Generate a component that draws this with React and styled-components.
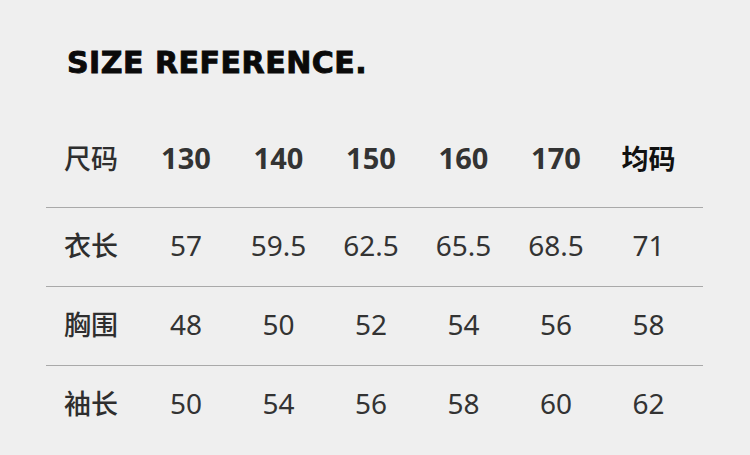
import React from "react";
import styled, { createGlobalStyle } from "styled-components";

const GlobalStyle = createGlobalStyle`
  html, body {
    margin: 0;
    padding: 0;
    background: #efefef;
  }
`;

const sizes = ["130", "140", "150", "160", "170"];

const rows = [
  { label: "衣长", values: ["57", "59.5", "62.5", "65.5", "68.5", "71"] },
  { label: "胸围", values: ["48", "50", "52", "54", "56", "58"] },
  { label: "袖长", values: ["50", "54", "56", "58", "60", "62"] },
];

export default function App() {
  return (
    <Page>
      <GlobalStyle />
      <Title>SIZE REFERENCE.</Title>
      <Table>
        <Row $header $line>
          <Label>尺码</Label>
          {sizes.map((s) => (
            <HeadCell key={s}>{s}</HeadCell>
          ))}
          <HeadCell $cjk>均码</HeadCell>
        </Row>
        {rows.map((r, i) => (
          <Row key={r.label} $line={i < rows.length - 1}>
            <Label>{r.label}</Label>
            {r.values.map((v, j) => (
              <Cell key={j}>{v}</Cell>
            ))}
          </Row>
        ))}
      </Table>
    </Page>
  );
}

const Page = styled.div`
  width: 750px;
  height: 455px;
  box-sizing: border-box;
  padding: 47px 47px 0 46px;
  background: #efefef;
  overflow: hidden;
`;

const Title = styled.h1`
  margin: 0 0 0 21px;
  font-family: "DejaVu Sans", "Liberation Sans", sans-serif;
  font-weight: 700;
  font-size: 30px;
  line-height: 32px;
  letter-spacing: 0.5px;
  color: #0a0a0a;
  -webkit-text-stroke: 0.9px #0a0a0a;
  white-space: nowrap;
`;

const Table = styled.div`
  margin-top: 50px;
  display: flex;
  flex-direction: column;
`;

const Row = styled.div`
  display: grid;
  grid-template-columns: 93.75px repeat(6, 92.5px);
  align-items: center;
  height: 79px;
  box-sizing: border-box;
  padding-bottom: ${({ $header }) => ($header ? "21px" : "5px")};
  border-bottom: 1px solid ${({ $line }) => ($line ? "#a9a9a9" : "transparent")};
`;

const Label = styled.div`
  padding-left: 18px;
  font-family: "Noto Sans CJK SC", sans-serif;
  font-weight: 500;
  font-size: 27px;
  color: #2e2e2e;
`;

const HeadCell = styled.div`
  text-align: center;
  font-family: ${({ $cjk }) =>
    $cjk ? '"Noto Sans CJK SC", sans-serif' : '"Noto Sans", "Open Sans", sans-serif'};
  font-weight: 700;
  font-size: ${({ $cjk }) => ($cjk ? "27px" : "29px")};
  color: ${({ $cjk }) => ($cjk ? "#111" : "#333")};
`;

const Cell = styled.div`
  text-align: center;
  font-family: "Noto Sans", "Open Sans", sans-serif;
  font-weight: 400;
  font-size: 28px;
  color: #333;
`;
